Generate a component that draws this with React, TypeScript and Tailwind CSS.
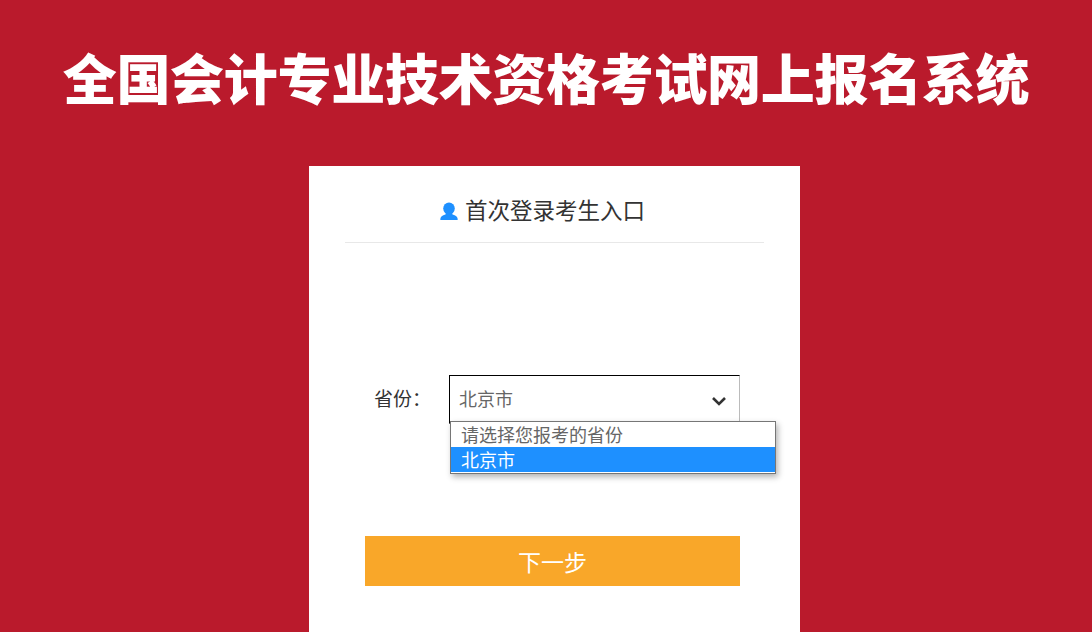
const cjk = "font-['Noto_Sans_CJK_SC','Liberation_Sans',sans-serif]";

const provinces = ["请选择您报考的省份", "北京市"];

export default function App() {
  return (
    <div className={`h-[632px] overflow-hidden bg-[#ba1a2c] ${cjk}`}>
      <h1 className="pt-[39px] pb-[2px] text-center text-[54px] leading-[75px] font-black tracking-[-0.3px] text-white whitespace-nowrap">
        全国会计专业技术资格考试网上报名系统
      </h1>

      <div className="ml-[309px] mt-[50px] w-[491px] h-[500px] bg-white px-9">
        {/* card heading */}
        <div className="h-[77px] border-b border-[#e8e8e8] flex items-center justify-center pr-6 pt-[9px]">
          <svg width="18" height="18" viewBox="0 0 18 18" className="mr-[7px] mt-[5px]">
            <ellipse cx="9" cy="6.500" rx="5.800" ry="6" fill="#1e90ff" />
            <path fill="#1e90ff" d="M6 10h6l.5 2.500c2 .8 4.500 1.300 5 3.500l.2 2H.3l.2-2c.5-2.200 3-2.700 5-3.500z" />
          </svg>
          <span className="text-[22.500px] leading-8 text-[#333]">首次登录考生入口</span>
        </div>

        {/* province select */}
        <div className="relative mt-[132px] flex items-start">
          <label className="w-[104px] pl-[29px] text-[19px] leading-[46px] text-[#333]">省份：</label>
          <div className="relative flex h-[49px] w-[291px] items-center justify-between border border-[#bbb] border-t-black border-l-black pl-[9px] pr-3 text-[18px] text-[#666]">
            <span className="-mt-[3px]">北京市</span>
            <svg width="16" height="12" viewBox="0 0 16 12" className="mt-[2px]">
              <path d="M2 3l6 6 6-6" fill="none" stroke="#333" strokeWidth="2.600" />
            </svg>
          </div>
          <ul className="absolute left-[105px] top-[46px] w-[326px] border border-[#767676] bg-white pb-px text-[18px] leading-[25px] shadow-[2px_3px_6px_rgba(0,0,0,0.3)]">
            {provinces.map((p, i) => (
              <li key={p} className={i === 1 ? "bg-[#1e90ff] pl-[10px] text-white" : "pl-[10px] text-[#666]"}>
                {p}
              </li>
            ))}
          </ul>
        </div>

        <button className="mt-[112px] ml-5 block h-[50px] w-[375px] bg-[#f9a729] text-[23px] text-white">
          下一步
        </button>
      </div>
    </div>
  );
}
